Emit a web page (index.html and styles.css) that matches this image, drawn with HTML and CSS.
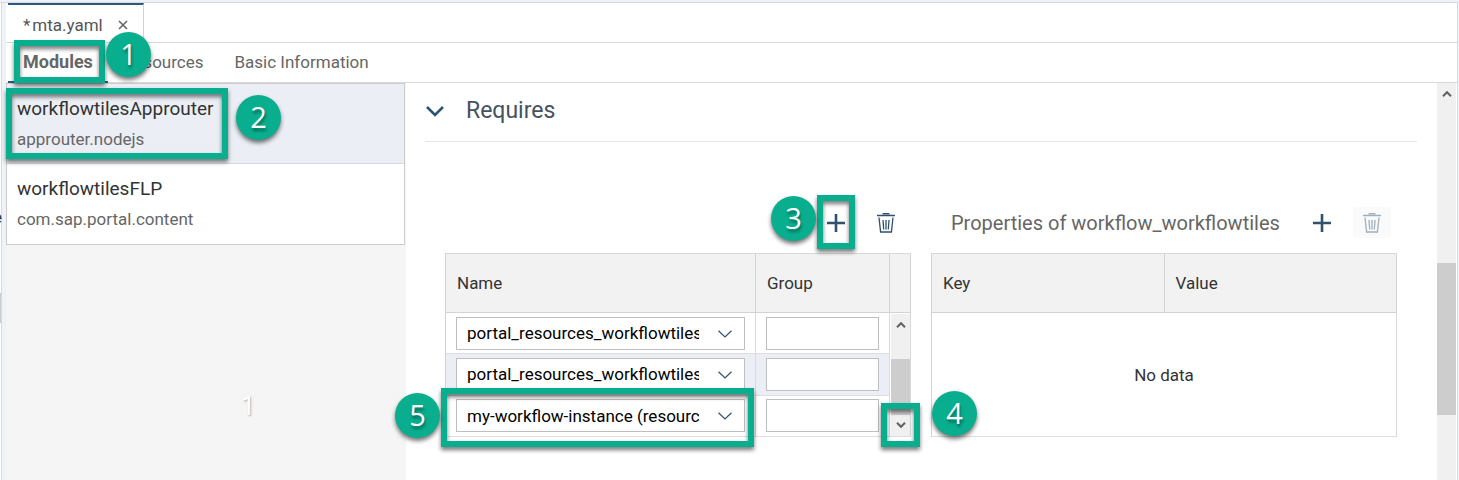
FILE: index.html
```html
<!DOCTYPE html>
<html lang="en">
<head>
<meta charset="utf-8">
<title>mta.yaml</title>
<link rel="stylesheet" href="styles.css">
</head>
<body>
<svg class="defs" width="0" height="0" aria-hidden="true">
  <symbol id="plus" viewBox="0 0 20 20"><path d="M10 1v18M1 10h18" fill="none" stroke="currentColor" stroke-width="2.600"/></symbol>
  <symbol id="trash" viewBox="0 0 20 22"><path d="M1 3.500h18M3 5.500l1.600 14.500h10.800L17 5.500M7 8l.7 9.500M10 8v9.500M13 8l-.7 9.500" fill="none" stroke="currentColor" stroke-width="1.300"/><path d="M6 2.500l1-1.500h6l1 1.500z" fill="currentColor"/></symbol>
  <symbol id="up" viewBox="0 0 10 8"><path d="M1 6.200L5 2.200L9 6.200" fill="none" stroke="currentColor" stroke-width="2"/></symbol>
  <symbol id="down" viewBox="0 0 10 8"><path d="M1 1.800L5 5.800L9 1.800" fill="none" stroke="currentColor" stroke-width="2"/></symbol>
  <symbol id="chevron" viewBox="0 0 14 8"><path d="M.5 .8L7 7L13.500 .8" fill="none" stroke="currentColor" stroke-width="1.200"/></symbol>
</svg>
<div class="app">
  <div class="gutter"><span class="gutter-text">e</span><span class="gutter-handle"></span></div>
  <div class="editor">
    <header class="tabs">
      <div class="tab"><span>*<span class="file">mta.yaml</span></span>
        <button class="close" type="button" aria-label="Close"><svg width="10" height="10" viewBox="0 0 10 10"><path d="M1 1l8 8M9 1l-8 8" stroke="currentColor" stroke-width="1.600"/></svg></button>
      </div>
    </header>
    <nav class="sections">
      <a class="section current" href="#modules">Modules<span class="frame frame-modules"></span><span class="badge badge-1">1</span></a>
      <a class="section" href="#resources">Resources</a>
      <a class="section" href="#basic">Basic Information</a>
    </nav>
    <div class="body">
      <aside class="sidebar">
        <ul class="modules">
          <li class="module selected"><span class="name">workflowtilesApprouter</span><span class="type">approuter.nodejs</span><span class="frame frame-module"></span><span class="badge badge-2">2</span></li>
          <li class="module"><span class="name">workflowtilesFLP</span><span class="type">com.sap.portal.content</span></li>
        </ul>
        <span class="ghost">1</span>
      </aside>
      <main class="content">
        <section class="requires">
          <h2 class="heading"><svg width="20" height="12" viewBox="0 0 20 12"><path d="M2 2l8 8l8-8" fill="none" stroke="currentColor" stroke-width="2.600"/></svg>Requires</h2>
          <div class="panels">
            <div class="panel">
              <div class="toolbar">
                <button class="tool" type="button" aria-label="Add"><svg width="20" height="20"><use href="#plus"/></svg><span class="frame frame-add"></span><span class="badge badge-3">3</span></button>
                <button class="tool" type="button" aria-label="Delete"><svg width="20" height="22"><use href="#trash"/></svg></button>
              </div>
              <table class="grid">
                <colgroup><col><col class="col-group"><col class="col-scroll"></colgroup>
                <thead><tr><th>Name</th><th>Group</th><th></th></tr></thead>
                <tbody>
                  <tr>
                    <td><div class="picker"><select aria-label="Name"><option>portal_resources_workflowtiles (resource)</option></select><svg width="14" height="8"><use href="#chevron"/></svg></div></td>
                    <td><input class="field" type="text" aria-label="Group"></td>
                    <td class="scroll-cell" rowspan="3">
                      <div class="scroll inner"><svg class="arrow" width="10" height="8"><use href="#up"/></svg><span class="thumb"></span><svg class="arrow" width="10" height="8"><use href="#down"/></svg></div>
                      <span class="frame frame-scroll"></span><span class="badge badge-4">4</span>
                    </td>
                  </tr>
                  <tr class="alt">
                    <td><div class="picker"><select aria-label="Name"><option>portal_resources_workflowtiles (resource)</option></select><svg width="14" height="8"><use href="#chevron"/></svg></div></td>
                    <td><input class="field" type="text" aria-label="Group"></td>
                  </tr>
                  <tr>
                    <td><div class="picker"><select aria-label="Name"><option>my-workflow-instance (resource)</option></select><svg width="14" height="8"><use href="#chevron"/></svg></div><span class="frame frame-row"></span><span class="badge badge-5">5</span></td>
                    <td><input class="field" type="text" aria-label="Group"></td>
                  </tr>
                </tbody>
              </table>
            </div>
            <div class="panel">
              <div class="toolbar">
                <h3 class="title">Properties of workflow_workflowtiles</h3>
                <button class="tool" type="button" aria-label="Add property"><svg width="20" height="20"><use href="#plus"/></svg></button>
                <button class="tool" type="button" aria-label="Delete property" disabled><svg width="20" height="22"><use href="#trash"/></svg></button>
              </div>
              <table class="grid">
                <thead><tr><th>Key</th><th>Value</th></tr></thead>
                <tbody><tr><td class="empty" colspan="2">No data</td></tr></tbody>
              </table>
            </div>
          </div>
        </section>
      </main>
      <div class="scroll outer"><svg class="arrow" width="10" height="8"><use href="#up"/></svg><span class="thumb"></span></div>
    </div>
  </div>
</div>
</body>
</html>
```
FILE: styles.css
```css
* { box-sizing: border-box; }
body {
  margin: 0;
  font: 17px/24px Roboto, "Liberation Sans", sans-serif;
  color: #333;
  background: #eff3f8;
}
button, input, select { font: inherit; margin: 0; }
.defs { position: absolute; }
.app { display: flex; min-height: 100vh; padding: 2px 1px 0 0; }

.gutter {
  position: relative;
  flex: 0 0 6px;
  border-top: 1px solid #dadbdf;
  background: linear-gradient(to right, #fff 1px, #d9dbe0 1px 2px, #eff3f8 2px);
}
.gutter-text { position: absolute; left: 0; top: 202px; width: 2px; overflow: hidden; direction: rtl; }
.gutter-handle { position: absolute; left: 0; top: 290px; width: 1px; height: 30px; background: #ccc; }

.editor {
  flex: 1;
  min-width: 0;
  display: flex;
  flex-direction: column;
  background: #fff;
  border-top: 1px solid #d9d9d9;
  border-right: 1px solid #d9d9df;
}
.tabs { height: 40px; padding-left: 2px; display: flex; border-bottom: 1px solid #d9d9d9; }
.tab {
  display: flex;
  align-items: center;
  gap: 15px;
  padding: 2px 15px 0 15px;
  color: #555;
  border-top: 2px solid #2a5a82;
  border-right: 1px solid #d0d0d0;
}
.file { margin-left: 2px; }
.close { display: flex; padding: 0; border: 0; background: none; color: #666; }

.sections { display: flex; gap: 1px; height: 40px; padding-left: 2px; border-bottom: 1px solid #d9d9d9; }
.section {
  position: relative;
  height: 40px;
  padding: 0 15px;
  line-height: 38px;
  color: #666;
  text-decoration: none;
}
.current { font-size: 18px; font-weight: 700; border-bottom: 2px solid #2a5a82; }

.body { flex: 1; display: flex; }
.sidebar { position: relative; flex: 0 0 400px; background: #f5f5f5; padding-right: 1px; }
.modules { list-style: none; margin: 0; padding: 0; border: 1px solid #ccc; background: #fff; }
.module { position: relative; height: 80px; padding: 11px 10px; }
.selected { background: #ebeff5; border-bottom: 1px solid #d9d9d9; }
.name, .type { display: block; }
.name { font-size: 19px; line-height: 28px; color: #333; }
.type { line-height: 32px; color: #666; }
.ghost { position: absolute; left: 235px; top: 309px; font-size: 25px; line-height: 30px; color: #fff; text-shadow: 1px 1px 2px #aaa; }

.content { flex: 1; min-width: 0; padding: 0 20px 0 19px; }
.heading {
  display: flex;
  align-items: center;
  gap: 21px;
  height: 59px;
  margin: 0;
  padding-bottom: 2px;
  font-size: 23px;
  font-weight: 400;
  color: #45525f;
  border-bottom: 1px solid #e5e5e5;
}
.heading svg { color: #2a5578; }
.panels { display: grid; grid-template-columns: 1fr 1fr; gap: 20px; padding: 65px 20px 0; }
.panel { min-width: 0; }
.toolbar { display: flex; justify-content: flex-end; gap: 12px; height: 46px; padding: 0 6px 15px 20px; }
.title { flex: 1; margin: 0; font-size: 20px; line-height: 32px; font-weight: 400; color: #666; white-space: nowrap; }
.tool {
  position: relative;
  display: flex;
  align-items: center;
  justify-content: center;
  width: 38px;
  height: 31px;
  padding: 0;
  border: 0;
  border-radius: 3px;
  background: none;
  color: #31506d;
}
.tool:disabled { background: #fafafa; color: #9eafbf; }

.grid { width: 100%; table-layout: fixed; border-collapse: separate; border-spacing: 0; border-top: 1px solid #d9d9d9; border-left: 1px solid #d3d3d3; }
.col-group { width: 134px; }
.col-scroll { width: 21px; }
.grid th {
  height: 59px;
  padding: 0 11px;
  text-align: left;
  font-weight: 400;
  background: #f2f2f2;
  border-right: 1px solid #d3d3d3;
  border-bottom: 1px solid #d3d3d3;
}
.grid td { position: relative; height: 41px; padding: 0 10px; border-right: 1px solid #d9d9d9; border-bottom: 1px solid #dedede; }
.alt td { background: #ebeff5; }
.grid .empty { height: 124px; text-align: center; }
.picker { position: relative; color: #000; }
.picker svg { position: absolute; right: 13px; top: 13px; color: #31506d; }
.picker select, .field {
  display: block;
  width: 100%;
  height: 33px;
  border: 1px solid #bfbfbf;
  border-radius: 0;
  background: #fff;
  color: #000;
}
.picker select { appearance: none; padding: 0 45px 0 10px; }
.grid .scroll-cell { height: 123px; padding: 1px 0 0 1px; }
.grid th:empty { padding: 0; }

.scroll { display: flex; flex-direction: column; align-items: center; background: #f0f0f0; color: #606060; }
.arrow { flex: none; margin: 7px 0; }
.thumb { width: 100%; background: #cdcdcd; }
.inner { height: 122px; }
.inner .thumb { height: 56px; margin: 23px 0 -1px; }
.outer { flex: 0 0 19px; margin-right: 1px; }
.outer .thumb { height: 152px; margin-top: 158px; }

.frame { position: absolute; z-index: 2; border: 6px solid #09ae8e; filter: drop-shadow(0 3px 2px #0008); pointer-events: none; }
.badge {
  position: absolute;
  z-index: 3;
  width: 45px;
  height: 45px;
  border-radius: 50%;
  background: #09ae8e;
  box-shadow: 0 3px 4px #0008;
  color: #fff;
  font: 400 29px/43px "Open Sans", sans-serif;
  text-align: center;
  text-shadow: 1px 3px 3px #0006;
}
.frame-modules { left: 6px; top: -3px; width: 91px; height: 43px; }
.badge-1 { left: 98px; top: -11px; }
.frame-module { left: -1px; top: 4px; width: 222px; height: 71px; }
.badge-2 { left: 229px; top: 11px; }
.frame-add { left: 0; top: -12px; width: 38px; height: 54px; }
.badge-3 { left: -46px; top: -11px; }
.frame-scroll { right: -10px; bottom: -11px; width: 39px; height: 44px; }
.badge-4 { left: 42px; bottom: 0; }
.frame-row { left: -5px; right: 1px; top: -8px; bottom: -11px; }
.badge-5 { left: -51px; top: -3px; }
```
